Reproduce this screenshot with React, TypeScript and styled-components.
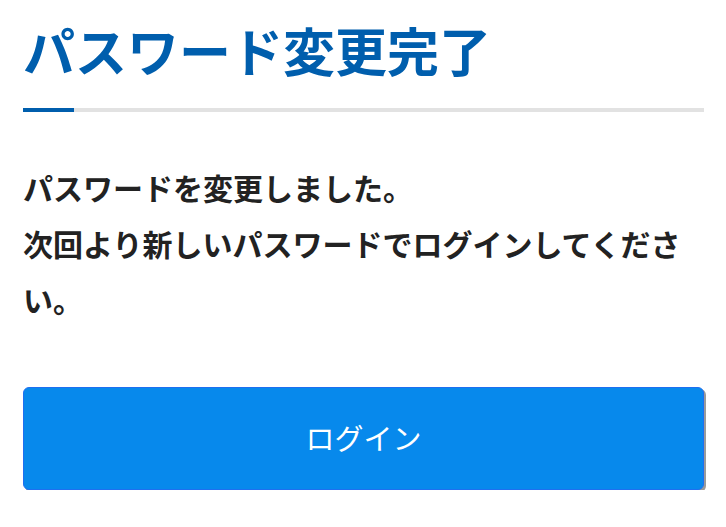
import React from "react";
import styled, { createGlobalStyle } from "styled-components";

const GlobalStyle = createGlobalStyle`
  html, body {
    margin: 0;
    padding: 0;
    background: #ffffff;
  }
  body {
    font-family: "Noto Sans CJK JP", "Noto Sans", sans-serif;
  }
  * { box-sizing: border-box; }
`;

const Page = styled.main`
  width: 726px;
  padding: 15px 22px 0 23px;
  display: flex;
  flex-direction: column;
`;

const Title = styled.h1`
  margin: 0;
  font-size: 52px;
  line-height: 70px;
  font-weight: 700;
  letter-spacing: 0;
  color: #005ead;
`;

const Rule = styled.div`
  margin-top: 23px;
  height: 4px;
  background: #e2e2e2;
  display: flex;
`;

const RuleAccent = styled.span`
  width: 51px;
  height: 100%;
  background: #005ead;
`;

const Message = styled.p`
  margin: 47px 0 0;
  font-size: 30px;
  line-height: 56px;
  font-weight: 700;
  color: #222222;
`;

const LoginButton = styled.button`
  margin-top: 60px;
  width: 100%;
  height: 103px;
  border: 1px solid #1f6ff0;
  border-radius: 6px;
  background: #0789ec;
  box-shadow: 2px 2px 0 #9a9a9a;
  color: #ffffff;
  font-family: "Noto Sans CJK JP", "Noto Sans", sans-serif;
  font-size: 29px;
  font-weight: 400;
  display: flex;
  align-items: center;
  justify-content: center;
  padding: 0 0 4px;
  cursor: pointer;
`;

export default function App() {
  return (
    <>
      <GlobalStyle />
      <Page>
        <Title>パスワード変更完了</Title>
        <Rule>
          <RuleAccent />
        </Rule>
        <Message>
          パスワードを変更しました。
          <br />
          次回より新しいパスワードでログインしてください。
        </Message>
        <LoginButton type="button">ログイン</LoginButton>
      </Page>
    </>
  );
}
